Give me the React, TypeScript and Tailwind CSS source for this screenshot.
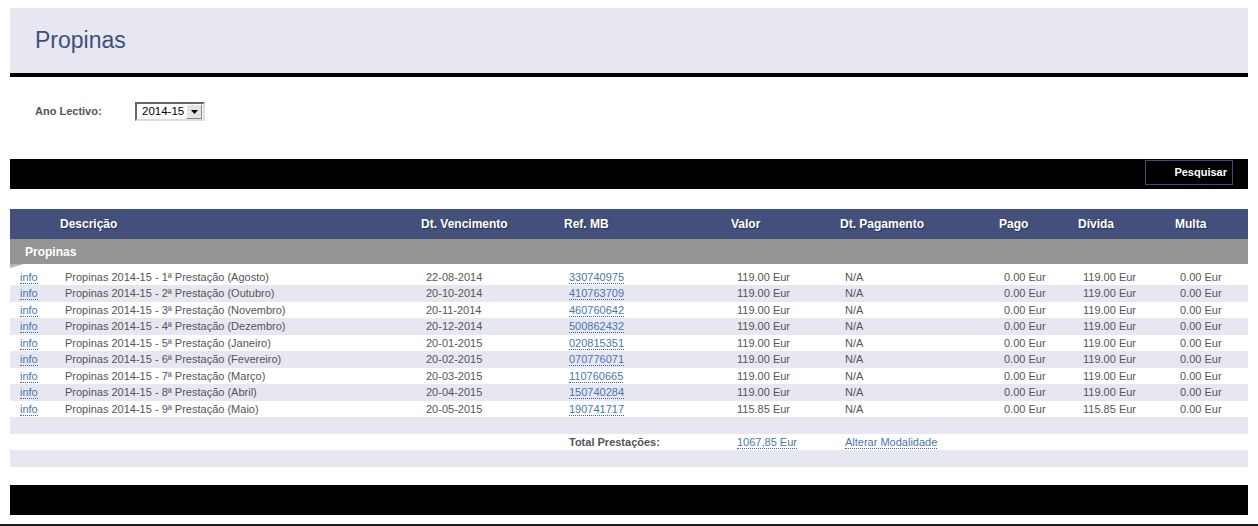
import React from "react";

const rows = [
  ["1ª Prestação (Agosto)", "22-08-2014", "330740975", "119.00 Eur", "119.00 Eur"],
  ["2ª Prestação (Outubro)", "20-10-2014", "410763709", "119.00 Eur", "119.00 Eur"],
  ["3ª Prestação (Novembro)", "20-11-2014", "460760642", "119.00 Eur", "119.00 Eur"],
  ["4ª Prestação (Dezembro)", "20-12-2014", "500862432", "119.00 Eur", "119.00 Eur"],
  ["5ª Prestação (Janeiro)", "20-01-2015", "020815351", "119.00 Eur", "119.00 Eur"],
  ["6ª Prestação (Fevereiro)", "20-02-2015", "070776071", "119.00 Eur", "119.00 Eur"],
  ["7ª Prestação (Março)", "20-03-2015", "110760665", "119.00 Eur", "119.00 Eur"],
  ["8ª Prestação (Abril)", "20-04-2015", "150740284", "119.00 Eur", "119.00 Eur"],
  ["9ª Prestação (Maio)", "20-05-2015", "190741717", "115.85 Eur", "115.85 Eur"],
];

const grid =
  "grid grid-cols-[50px_361px_143px_167px_109px_159px_79px_97px_75px]";

function Link({ children }: { children: React.ReactNode }) {
  return (
    <span className="text-[#4a76b0] border-b border-dotted border-[#3a66a8] leading-[13px]">
      {children}
    </span>
  );
}

export default function App() {
  return (
    <div className="min-h-[526px] bg-white font-['Liberation_Sans',Arial,sans-serif]">
      <div className="px-[10px] pt-[8px]">
        <div className="h-[65px] bg-[#e7e7f1] flex items-center pl-[25px]">
          <span className="text-[23px] text-[#414f7e] leading-none">Propinas</span>
        </div>
        <div className="h-[4px] bg-black" />

        <div className="h-[82px] pt-[25px] pl-[25px]">
          <div className="flex items-center h-[19px]">
            <span className="w-[100px] text-[11px] font-bold text-[#555]">Ano Lectivo:</span>
            <div className="w-[70px] h-[19px] flex items-center bg-white border-2 border-t-[#666] border-l-[#666] border-b-[#ddd] border-r-[#ddd]">
              <span className="flex-1 pl-[5px] text-[11.5px] text-black leading-none whitespace-nowrap">2014-15</span>
              <div className="w-[16px] h-[15px] mr-[1px] shrink-0 bg-[#e4e4e4] border border-t-[#fff] border-l-[#fff] border-b-[#888] border-r-[#888] flex items-center justify-center">
                <svg width="7" height="4" viewBox="0 0 7 4">
                  <polygon points="0,0 7,0 3.5,4" fill="#000" />
                </svg>
              </div>
            </div>
          </div>
        </div>

        <div className="h-[30px] bg-black flex justify-end pt-[1px] pr-[15px]">
          <div className="w-[88px] h-[25px] border border-[#3f4c7e] flex items-center justify-end pr-[5px]">
            <span className="text-[11px] font-bold text-white">Pesquisar</span>
          </div>
        </div>

        <div className={`${grid} mt-[20px] h-[30px] bg-[#43507b] items-center text-[12px] font-bold text-white [text-shadow:1px_1px_1px_rgba(0,0,0,0.35)]`}>
          <span />
          <span>Descrição</span>
          <span>Dt. Vencimento</span>
          <span>Ref. MB</span>
          <span>Valor</span>
          <span>Dt. Pagamento</span>
          <span>Pago</span>
          <span>Dívida</span>
          <span>Multa</span>
        </div>
        <div className="h-[25px] bg-[#959593] flex items-center pl-[15px]">
          <span className="text-[12px] font-bold text-white">Propinas</span>
        </div>
        <div className="h-[4.5px] relative">
          <svg className="absolute left-0 top-0" width="14" height="4" viewBox="0 0 14 4">
            <polygon points="0,0 14,0 0,4" fill="#b5b5b3" />
          </svg>
        </div>

        {rows.map((r, i) => (
          <div
            key={i}
            className={`${grid} h-[16.5px] items-center text-[11px] text-[#555] ${i % 2 === 1 ? "bg-[#e7e7f1]" : "bg-white"}`}
          >
            <span className="pl-[10px]"><Link>info</Link></span>
            <span className="pl-[5px]">Propinas 2014-15 - {r[0]}</span>
            <span className="pl-[5px]">{r[1]}</span>
            <span className="pl-[5px]"><Link>{r[2]}</Link></span>
            <span className="pl-[6px]">{r[3]}</span>
            <span className="pl-[5px]">N/A</span>
            <span className="pl-[5px]">0.00 Eur</span>
            <span className="pl-[5px]">{r[4]}</span>
            <span className="pl-[5px]">0.00 Eur</span>
          </div>
        ))}
        <div className="h-[16.5px] bg-[#e7e7f1]" />
        <div className={`${grid} h-[16.5px] items-center text-[11px] text-[#555] bg-white`}>
          <span />
          <span />
          <span />
          <span className="pl-[5px] font-bold">Total Prestações:</span>
          <span className="pl-[6px]"><Link>1067,85 Eur</Link></span>
          <span className="pl-[5px]"><Link>Alterar Modalidade</Link></span>
          <span />
          <span />
          <span />
        </div>
        <div className="h-[16.5px] bg-[#e7e7f1]" />

        <div className="h-[30px] bg-black mt-[18px]" />
      </div>
      <div className="mt-[9.5px] h-[2px] bg-[#1a1a1a]" />
    </div>
  );
}
